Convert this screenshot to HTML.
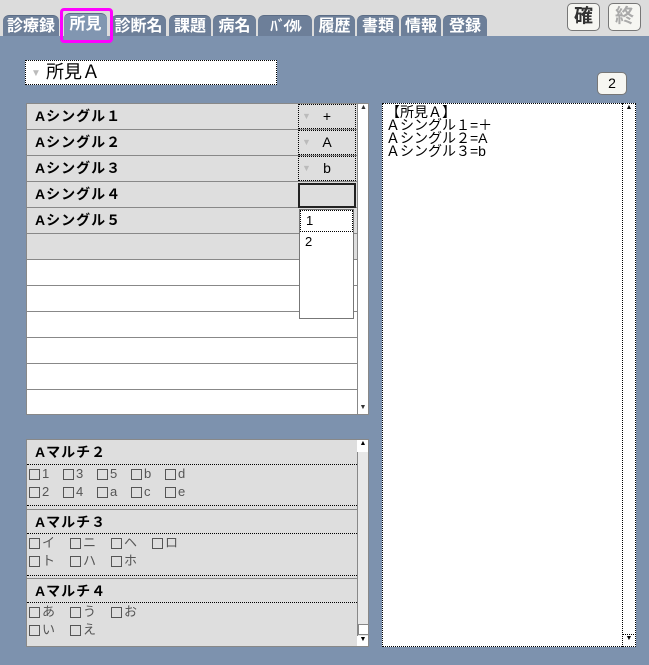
<!DOCTYPE html>
<html><head><meta charset="utf-8"><style>
*{margin:0;padding:0;box-sizing:border-box}
body{width:649px;height:665px;overflow:hidden;background:#7d92ae;font-family:"Liberation Sans","Noto Sans CJK JP",sans-serif;position:relative}
.a{position:absolute}
.top{left:0;top:0;width:649px;height:36px;background:#dcdcdc}
.tab{position:absolute;top:15px;height:21px;background:#6d7f99;color:#fff;font-size:16px;font-weight:bold;line-height:21px;text-align:center;border-radius:6px 6px 0 0;border-top:1px solid #5c6d86}
.btn{position:absolute;background:#f6f6f2;border:1px solid #777;border-radius:5px;font-size:19px;font-weight:bold;text-align:center}
.row{position:absolute;left:0;width:330px;height:26px;border-bottom:1px solid #888;font-size:14px;font-weight:bold;padding-left:8px;line-height:24px;letter-spacing:1px}
.g{background:#dedede}
.w{background:#fff}
.dd{position:absolute;left:271px;width:58px;height:25px;border:1px dotted #000;font-size:14px;line-height:23px;text-align:center}
.dd:before{content:"▼";position:absolute;left:3px;color:#bbb;font-size:9px}
.mh{position:absolute;left:0;width:330px;height:25px;background:#dedede;font-size:14px;font-weight:bold;padding-left:8px;line-height:24px;border-bottom:1px solid #888;letter-spacing:1px}
.mo{position:absolute;left:0;width:330px;background:#dedede;border-top:1px dotted #000;border-bottom:1px dotted #000;font-size:13px;color:#555;line-height:18px;padding-left:2px}
.cb{display:inline-block;width:11px;height:11px;border:1px solid #555;vertical-align:-2px;margin-right:2px}
.o{display:inline-block;width:34px}
.o2{display:inline-block;width:41px}
</style></head><body>
<div class="a top"></div>
<div class="tab" style="left:3px;width:56px">診療録</div>
<div class="tab" style="left:64px;width:43px;top:13px;height:30px;background:#8196b1">所見</div>
<div class="tab" style="left:111px;width:55px">診断名</div>
<div class="tab" style="left:169px;width:42px">課題</div>
<div class="tab" style="left:213px;width:43px">病名</div>
<div class="tab" style="left:258px;width:54px;font-size:15px;letter-spacing:-2px">ﾊﾞｲﾀﾙ</div>
<div class="tab" style="left:314px;width:41px">履歴</div>
<div class="tab" style="left:357px;width:42px">書類</div>
<div class="tab" style="left:401px;width:40px">情報</div>
<div class="tab" style="left:443px;width:44px">登録</div>
<div class="a" style="left:60px;top:8px;width:53px;height:35px;border:3px solid #f0f;border-radius:4px"></div>
<div class="btn" style="left:567px;top:3px;width:33px;height:28px;line-height:26px;color:#333">確</div>
<div class="btn" style="left:608px;top:3px;width:33px;height:28px;line-height:26px;color:#aaa">終</div>
<div class="a" style="left:25px;top:60px;width:252px;height:25px;background:#fff;border:1px dotted #000;font-size:18px;line-height:23px;padding-left:20px">所見Ａ<span style="position:absolute;left:5px;top:1px;color:#bbb;font-size:10px">▼</span></div>
<div class="btn" style="left:597px;top:72px;width:30px;height:23px;font-size:14px;font-weight:normal;line-height:21px">2</div>

<div class="a" style="left:26px;top:103px;width:343px;height:312px;background:#fff;border:1px solid #888;overflow:hidden">
<div class="row g" style="top:0">Aシングル１</div>
<div class="row g" style="top:26px">Aシングル２</div>
<div class="row g" style="top:52px">Aシングル３</div>
<div class="row g" style="top:78px">Aシングル４</div>
<div class="row g" style="top:104px">Aシングル５</div>
<div class="row g" style="top:130px"></div>
<div class="row w" style="top:156px"></div>
<div class="row w" style="top:182px"></div>
<div class="row w" style="top:208px"></div>
<div class="row w" style="top:234px"></div>
<div class="row w" style="top:260px"></div>
<div class="row w" style="top:286px;border:0"></div>
<div class="dd" style="top:0">+</div>
<div class="dd" style="top:26px">A</div>
<div class="dd" style="top:52px">b</div>
<div class="a" style="left:271px;top:79px;width:58px;height:25px;border:2px solid #222;background:#dedede"></div>
<div class="a" style="left:272px;top:105px;width:55px;height:110px;border:1px solid #777;background:#fff;font-size:13px">
<div style="height:22px;border:1px dotted #000;padding-left:5px;line-height:20px">1</div>
<div style="padding-left:5px;line-height:20px">2</div></div>
<div class="a" style="left:330px;top:0;width:12px;height:312px;background:#fff;border-left:1px solid #888;font-size:7px;text-align:center;color:#333">▲</div>
<div class="a" style="left:330px;top:300px;width:12px;height:11px;font-size:7px;text-align:center;color:#333">▼</div>
</div>

<div class="a" style="left:26px;top:439px;width:343px;height:208px;background:#dedede;border:1px solid #888;overflow:hidden">
<div class="mh" style="top:0">Aマルチ２</div>
<div class="mo" style="top:24px;height:42px"><span class="o"><i class="cb"></i>1</span><span class="o"><i class="cb"></i>3</span><span class="o"><i class="cb"></i>5</span><span class="o"><i class="cb"></i>b</span><span class="o"><i class="cb"></i>d</span><br><span class="o"><i class="cb"></i>2</span><span class="o"><i class="cb"></i>4</span><span class="o"><i class="cb"></i>a</span><span class="o"><i class="cb"></i>c</span><span class="o"><i class="cb"></i>e</span></div>
<div class="mh" style="top:69px;border-top:1px solid #888">Aマルチ３</div>
<div class="mo" style="top:93px;height:43px"><span class="o2"><i class="cb"></i>イ</span><span class="o2"><i class="cb"></i>ニ</span><span class="o2"><i class="cb"></i>ヘ</span><span class="o2"><i class="cb"></i>ロ</span><br><span class="o2"><i class="cb"></i>ト</span><span class="o2"><i class="cb"></i>ハ</span><span class="o2"><i class="cb"></i>ホ</span></div>
<div class="mh" style="top:138px;border-top:1px solid #888">Aマルチ４</div>
<div class="mo" style="top:162px;height:46px"><span class="o2"><i class="cb"></i>あ</span><span class="o2"><i class="cb"></i>う</span><span class="o2"><i class="cb"></i>お</span><br><span class="o2"><i class="cb"></i>い</span><span class="o2"><i class="cb"></i>え</span></div>
<div class="a" style="left:330px;top:0;width:12px;height:208px;background:#e8e8e8;border-left:1px solid #888"></div>
<div class="a" style="left:330px;top:0;width:12px;height:12px;background:#fff;font-size:7px;text-align:center">▲</div>
<div class="a" style="left:331px;top:184px;width:11px;height:11px;background:#fff;border:1px solid #888"></div>
<div class="a" style="left:330px;top:196px;width:12px;height:12px;background:#fff;font-size:7px;text-align:center">▼</div>
</div>

<div class="a" style="left:382px;top:103px;width:254px;height:544px;background:#fff;border:1px dotted #000;font-size:14px;line-height:13px;padding:2px 3px">【所見Ａ】<br>Ａシングル１=＋<br>Ａシングル２=A<br>Ａシングル３=b</div>
<div class="a" style="left:622px;top:103px;width:14px;height:544px;border:1px dotted #000;background:#fff;font-size:7px;text-align:center">▲</div>
<div class="a" style="left:622px;top:634px;width:14px;height:13px;border:1px dotted #000;font-size:7px;text-align:center">▼</div>
</body></html>
